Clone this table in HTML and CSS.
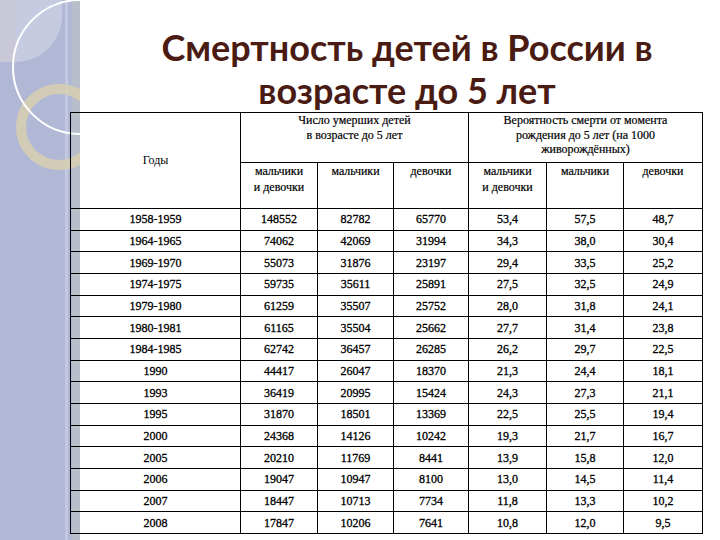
FILE: index.html
```html
<!DOCTYPE html>
<html lang="ru">
<head>
<meta charset="utf-8">
<title>Смертность детей в России</title>
<link rel="stylesheet" href="styles.css">
</head>
<body>
<div class="slide">
  <svg class="deco" width="80" height="540" viewBox="0 0 80 540">
    <rect x="0" y="0" width="80" height="540" fill="#b1b8d6"/>
    <path d="M0 0 H62 V18 A46 46 0 0 1 16 62 H0 Z" fill="#c6cbe2"/>
    <rect x="0" y="0" width="16" height="62" fill="#c9c8d6"/>
    <rect x="65" y="0" width="3" height="540" fill="#c3c8e0"/>
    <rect x="72" y="0" width="8" height="540" fill="#b9bfca"/>
    <circle cx="59" cy="127" r="38" fill="none" stroke="#d6ceb4" stroke-width="10" opacity="0.9"/>
    <circle cx="80" cy="67" r="67" fill="none" stroke="#ffffff" stroke-width="2"/>
  </svg>
  <div class="content">
    <h1 class="title">Смертность детей в России в<br>возрасте до 5 лет</h1>
    <table class="data">
      <colgroup>
        <col class="c-year"><col class="c1"><col class="c2"><col class="c3"><col class="c4"><col class="c5"><col class="c6">
      </colgroup>
      <thead>
        <tr class="h1">
          <th rowspan="2" class="years">Годы</th>
          <th colspan="3" class="group">Число умерших детей<br>в возрасте до 5 лет</th>
          <th colspan="3" class="group">Вероятность смерти от момента<br>рождения до 5 лет (на 1000<br>живорождённых)</th>
        </tr>
        <tr class="h2">
          <th class="sub">мальчики<br>и девочки</th>
          <th class="sub">мальчики</th>
          <th class="sub">девочки</th>
          <th class="sub">мальчики<br>и девочки</th>
          <th class="sub">мальчики</th>
          <th class="sub">девочки</th>
        </tr>
      </thead>
      <tbody>
        <tr><td>1958-1959</td><td>148552</td><td>82782</td><td>65770</td><td>53,4</td><td>57,5</td><td>48,7</td></tr>
        <tr><td>1964-1965</td><td>74062</td><td>42069</td><td>31994</td><td>34,3</td><td>38,0</td><td>30,4</td></tr>
        <tr><td>1969-1970</td><td>55073</td><td>31876</td><td>23197</td><td>29,4</td><td>33,5</td><td>25,2</td></tr>
        <tr><td>1974-1975</td><td>59735</td><td>35611</td><td>25891</td><td>27,5</td><td>32,5</td><td>24,9</td></tr>
        <tr><td>1979-1980</td><td>61259</td><td>35507</td><td>25752</td><td>28,0</td><td>31,8</td><td>24,1</td></tr>
        <tr><td>1980-1981</td><td>61165</td><td>35504</td><td>25662</td><td>27,7</td><td>31,4</td><td>23,8</td></tr>
        <tr><td>1984-1985</td><td>62742</td><td>36457</td><td>26285</td><td>26,2</td><td>29,7</td><td>22,5</td></tr>
        <tr><td>1990</td><td>44417</td><td>26047</td><td>18370</td><td>21,3</td><td>24,4</td><td>18,1</td></tr>
        <tr><td>1993</td><td>36419</td><td>20995</td><td>15424</td><td>24,3</td><td>27,3</td><td>21,1</td></tr>
        <tr><td>1995</td><td>31870</td><td>18501</td><td>13369</td><td>22,5</td><td>25,5</td><td>19,4</td></tr>
        <tr><td>2000</td><td>24368</td><td>14126</td><td>10242</td><td>19,3</td><td>21,7</td><td>16,7</td></tr>
        <tr><td>2005</td><td>20210</td><td>11769</td><td>8441</td><td>13,9</td><td>15,8</td><td>12,0</td></tr>
        <tr><td>2006</td><td>19047</td><td>10947</td><td>8100</td><td>13,0</td><td>14,5</td><td>11,4</td></tr>
        <tr><td>2007</td><td>18447</td><td>10713</td><td>7734</td><td>11,8</td><td>13,3</td><td>10,2</td></tr>
        <tr><td>2008</td><td>17847</td><td>10206</td><td>7641</td><td>10,8</td><td>12,0</td><td>9,5</td></tr>
      </tbody>
    </table>
  </div>
</div>
</body>
</html>
```

FILE: styles.css
```css
html, body {
  margin: 0;
  padding: 0;
  background: #ffffff;
}

.slide {
  position: relative;
  width: 720px;
  height: 540px;
  overflow: hidden;
  background: #ffffff;
}

.deco {
  position: absolute;
  left: 0;
  top: 0;
  display: block;
}

.content {
  position: relative;
  padding-left: 70px;
}

.title {
  margin: 0 0 0 24px;
  padding-top: 26px;
  height: 86px;
  font-family: Lato, "Open Sans", sans-serif;
  font-weight: 700;
  font-size: 36px;
  line-height: 43px;
  color: #4a1b12;
  text-align: center;
}

.data {
  border-collapse: collapse;
  table-layout: fixed;
  width: 632px;
  font-family: "Liberation Serif", "Times New Roman", serif;
  color: #000000;
}

.c-year { width: 170px; }
.c1 { width: 77px; }
.c2 { width: 76px; }
.c3 { width: 75px; }
.c4 { width: 78px; }
.c5 { width: 77px; }
.c6 { width: 79px; }

.data th,
.data td {
  border: 1px solid #000000;
  padding: 0;
  text-align: center;
  font-weight: 400;
}

.h1 { height: 50px; }
.h2 { height: 46px; }

.years {
  vertical-align: middle;
  font-size: 12px;
  font-weight: 700;
}

.group {
  vertical-align: top;
  font-size: 12px;
  line-height: 14.5px;
  padding-top: 5px;
  -webkit-text-stroke: 0.2px #000000;
}

.sub {
  vertical-align: top;
  font-size: 12px;
  line-height: 16px;
  padding-top: 6px;
  -webkit-text-stroke: 0.2px #000000;
}

.data tbody tr {
  height: 21.67px;
}

.data td {
  font-size: 12px;
  line-height: 14px;
  vertical-align: middle;
  -webkit-text-stroke: 0.3px #000000;
}
```
